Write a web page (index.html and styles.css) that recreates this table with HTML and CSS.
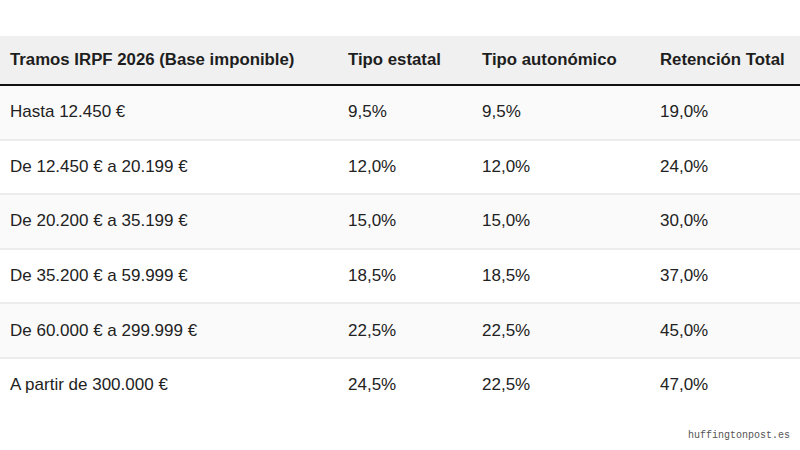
FILE: index.html
```html
<!DOCTYPE html>
<html lang="es">
<head>
<meta charset="utf-8">
<link rel="stylesheet" href="styles.css">
</head>
<body>
<div class="page">
  <table class="irpf">
    <thead>
      <tr>
        <th class="c1">Tramos IRPF 2026 (Base imponible)</th>
        <th class="c2">Tipo estatal</th>
        <th class="c3">Tipo autonómico</th>
        <th class="c4">Retención Total</th>
      </tr>
    </thead>
    <tbody>
      <tr><td>Hasta 12.450 €</td><td>9,5%</td><td>9,5%</td><td>19,0%</td></tr>
      <tr><td>De 12.450 € a 20.199 €</td><td>12,0%</td><td>12,0%</td><td>24,0%</td></tr>
      <tr><td>De 20.200 € a 35.199 €</td><td>15,0%</td><td>15,0%</td><td>30,0%</td></tr>
      <tr><td>De 35.200 € a 59.999 €</td><td>18,5%</td><td>18,5%</td><td>37,0%</td></tr>
      <tr><td>De 60.000 € a 299.999 €</td><td>22,5%</td><td>22,5%</td><td>45,0%</td></tr>
      <tr><td>A partir de 300.000 €</td><td>24,5%</td><td>22,5%</td><td>47,0%</td></tr>
    </tbody>
  </table>
  <div class="source">huffingtonpost.es</div>
</div>
</body>
</html>
```
FILE: styles.css
```css
html, body {
  margin: 0;
  padding: 0;
  background: #ffffff;
}
.page {
  position: relative;
  width: 800px;
  height: 450px;
  padding-top: 36px;
  box-sizing: border-box;
  font-family: "Liberation Sans", Arial, sans-serif;
  color: #222222;
}
.irpf {
  width: 800px;
  border-collapse: collapse;
  table-layout: fixed;
  font-size: 17px;
}
.irpf th {
  background: #f0f0f0;
  font-weight: bold;
  font-size: 16.8px;
  text-align: left;
  height: 48px;
  padding: 0 0 0 10px;
  border-bottom: 2px solid #111111;
  color: #1e1e1e;
}
.irpf td {
  height: 52.6px;
  padding: 0 0 0 10px;
  border-bottom: 2px solid #ececec;
}
.irpf tbody tr:nth-child(odd) td {
  background: #fafafa;
}
.irpf tbody tr:last-child td {
  border-bottom: none;
}
.irpf .c1 { width: 328px; }
.irpf .c2 { width: 124px; }
.irpf .c3 { width: 168px; }
.irpf .c4 { width: 140px; }
.source {
  position: absolute;
  right: 10px;
  bottom: 9px;
  font-family: "Liberation Mono", "DejaVu Sans Mono", monospace;
  font-size: 10px;
  color: #555555;
}
```
